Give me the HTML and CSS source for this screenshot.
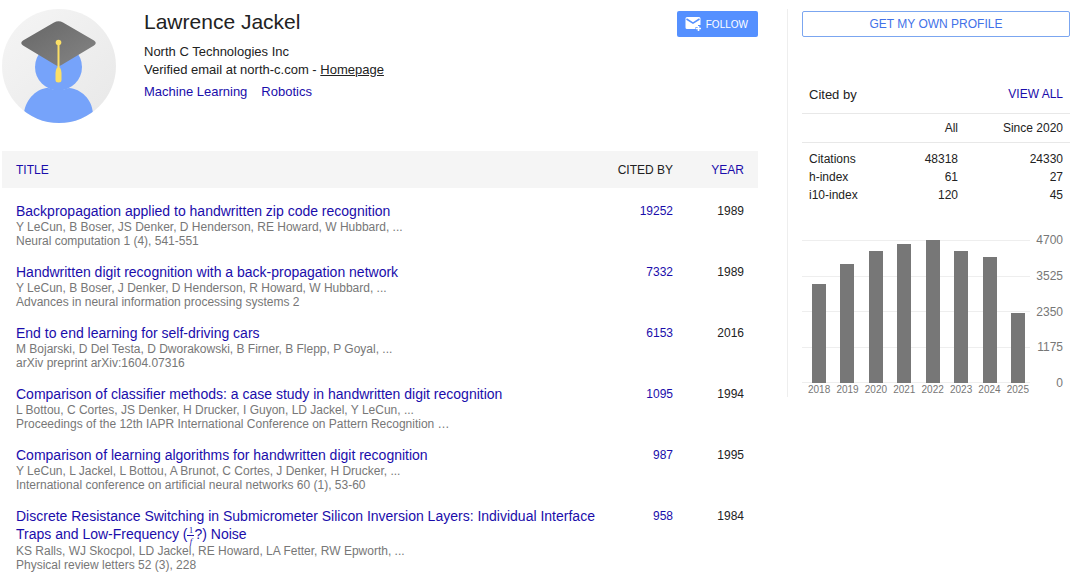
FILE: index.html
```html
<!DOCTYPE html>
<html lang="en">
<head>
    <meta charset="UTF-8">
    <meta name="viewport" content="width=device-width, initial-scale=1.0">
    <title>Lawrence Jackel</title>
    <link rel="stylesheet" href="styles.css">
</head>
<body>
    <div class="page">
        <main class="main">
            <header class="profile">
                <svg class="avatar" viewBox="0 0 114 114" aria-hidden="true">
                    <defs>
                        <clipPath id="circle"><circle cx="57" cy="57" r="57"/></clipPath>
                        <linearGradient id="bg" x1="0" y1="0" x2="1" y2="1">
                            <stop offset="0" stop-color="#f5f5f5"/>
                            <stop offset="1" stop-color="#e8e8e8"/>
                        </linearGradient>
                        <linearGradient id="cap" x1="0" y1="0" x2="1" y2="1">
                            <stop offset="0" stop-color="#666"/>
                            <stop offset="1" stop-color="#858585"/>
                        </linearGradient>
                    </defs>
                    <g clip-path="url(#circle)">
                        <rect width="114" height="114" fill="url(#bg)"/>
                        <circle cx="56.500" cy="58" r="23.500" fill="#76a3fa"/>
                        <path d="M22 114V104C24 89 36 79 46 79Q56.500 83 67 79C79 80 90 90 91 104V114Z" fill="#76a3fa"/>
                        <path d="M52 13.500Q56.500 11 61 13.500L92 31.500Q95.500 34 92 36.500L59.500 56Q56.500 58 53.500 56L21 36.500Q17.500 34 21 31.500Z" fill="url(#cap)"/>
                        <path d="M56.500 34V63" stroke="#fbdf66" stroke-width="2"/>
                        <circle cx="56.500" cy="33.500" r="2.800" fill="#fbdf66"/>
                        <path d="M55 58.500H58Q59.500 61 59.500 64V71Q59.500 73.500 56.500 73.500T53.500 71V64Q53.500 61 55 58.500Z" fill="#fbdf66"/>
                    </g>
                </svg>
                <div class="info">
                    <h1>Lawrence Jackel</h1>
                    <div class="line">North C Technologies Inc</div>
                    <div class="line">Verified email at north-c.com - <a class="homepage" href="#">Homepage</a></div>
                    <div class="interests">
                        <a href="#">Machine Learning</a>
                        <a href="#">Robotics</a>
                    </div>
                </div>
                <button class="follow" type="button">
                    <svg width="17" height="16" viewBox="0 0 17 16" aria-hidden="true">
                        <path d="M2 1H14Q15.500 1 15.500 2.500V9H13V11H10.500V13H2Q.5 13 .5 11.500V2.500Q.5 1 2 1Z" fill="#fff"/>
                        <path d="M1.500 3L8 7.200L14.500 3" fill="none" stroke="#5590ff" stroke-width="1.500"/>
                        <path d="M13.500 10V15M11 12.500H16" stroke="#fff" stroke-width="1.600"/>
                    </svg>
                    <span>FOLLOW</span>
                </button>
            </header>

            <table class="articles">
                <thead>
                    <tr>
                        <th class="title" scope="col"><a href="#">TITLE</a></th>
                        <th class="cited" scope="col">CITED BY</th>
                        <th class="year" scope="col"><a href="#">YEAR</a></th>
                    </tr>
                </thead>
                <tbody>
                    <tr>
                        <td class="title">
                            <a href="#">Backpropagation applied to handwritten zip code recognition</a>
                            <div class="gray">Y LeCun, B Boser, JS Denker, D Henderson, RE Howard, W Hubbard, ...</div>
                            <div class="gray">Neural computation 1 (4), 541-551</div>
                        </td>
                        <td class="cited"><a href="#">19252</a></td>
                        <td class="year">1989</td>
                    </tr>
                    <tr>
                        <td class="title">
                            <a href="#">Handwritten digit recognition with a back-propagation network</a>
                            <div class="gray">Y LeCun, B Boser, J Denker, D Henderson, R Howard, W Hubbard, ...</div>
                            <div class="gray">Advances in neural information processing systems 2</div>
                        </td>
                        <td class="cited"><a href="#">7332</a></td>
                        <td class="year">1989</td>
                    </tr>
                    <tr>
                        <td class="title">
                            <a href="#">End to end learning for self-driving cars</a>
                            <div class="gray">M Bojarski, D Del Testa, D Dworakowski, B Firner, B Flepp, P Goyal, ...</div>
                            <div class="gray">arXiv preprint arXiv:1604.07316</div>
                        </td>
                        <td class="cited"><a href="#">6153</a></td>
                        <td class="year">2016</td>
                    </tr>
                    <tr>
                        <td class="title">
                            <a href="#">Comparison of classifier methods: a case study in handwritten digit recognition</a>
                            <div class="gray">L Bottou, C Cortes, JS Denker, H Drucker, I Guyon, LD Jackel, Y LeCun, ...</div>
                            <div class="gray">Proceedings of the 12th IAPR International Conference on Pattern Recognition …</div>
                        </td>
                        <td class="cited"><a href="#">1095</a></td>
                        <td class="year">1994</td>
                    </tr>
                    <tr>
                        <td class="title">
                            <a href="#">Comparison of learning algorithms for handwritten digit recognition</a>
                            <div class="gray">Y LeCun, L Jackel, L Bottou, A Brunot, C Cortes, J Denker, H Drucker, ...</div>
                            <div class="gray">International conference on artificial neural networks 60 (1), 53-60</div>
                        </td>
                        <td class="cited"><a href="#">987</a></td>
                        <td class="year">1995</td>
                    </tr>
                    <tr>
                        <td class="title">
                            <a href="#">Discrete Resistance Switching in Submicrometer Silicon Inversion Layers: Individual Interface Traps and Low-Frequency (<span class="frac"><span>1</span><i>f</i></span>?) Noise</a>
                            <div class="gray">KS Ralls, WJ Skocpol, LD Jackel, RE Howard, LA Fetter, RW Epworth, ...</div>
                            <div class="gray">Physical review letters 52 (3), 228</div>
                        </td>
                        <td class="cited"><a href="#">958</a></td>
                        <td class="year">1984</td>
                    </tr>
                </tbody>
            </table>
        </main>

        <aside class="sidebar">
            <button class="own-profile" type="button">GET MY OWN PROFILE</button>

            <div class="cited-head">
                <h2>Cited by</h2>
                <a href="#">VIEW ALL</a>
            </div>
            <table class="stats">
                <thead>
                    <tr><th></th><th scope="col">All</th><th class="since" scope="col">Since 2020</th></tr>
                </thead>
                <tbody>
                    <tr><th scope="row">Citations</th><td>48318</td><td>24330</td></tr>
                    <tr><th scope="row">h-index</th><td>61</td><td>27</td></tr>
                    <tr><th scope="row">i10-index</th><td>120</td><td>45</td></tr>
                </tbody>
            </table>

            <div class="chart">
                <div class="plot">
                    <div class="grid"><hr><hr><hr><hr><hr></div>
                    <div class="bars">
                        <div class="bar" style="height: 69%"></div>
                        <div class="bar" style="height: 83%"></div>
                        <div class="bar" style="height: 92%"></div>
                        <div class="bar" style="height: 97%"></div>
                        <div class="bar" style="height: 100%"></div>
                        <div class="bar" style="height: 92%"></div>
                        <div class="bar" style="height: 88%"></div>
                        <div class="bar" style="height: 49%"></div>
                    </div>
                    <div class="years">
                        <span>2018</span><span>2019</span><span>2020</span><span>2021</span><span>2022</span><span>2023</span><span>2024</span><span>2025</span>
                    </div>
                </div>
                <div class="axis">
                    <span>4700</span><span>3525</span><span>2350</span><span>1175</span><span>0</span>
                </div>
            </div>
        </aside>
    </div>
</body>
</html>
```
FILE: styles.css
```css
body {
    margin: 0;
    background: #fff;
    color: #222;
    font-family: "Liberation Sans", Arial, sans-serif;
    font-size: 12px;
}

a {
    color: #1a0dab;
    text-decoration: none;
}

a:hover {
    text-decoration: underline;
}

button {
    font-family: inherit;
    cursor: pointer;
}

table {
    width: 100%;
    border-collapse: collapse;
}

th {
    font-weight: normal;
}

.page {
    display: flex;
    align-items: flex-start;
    gap: 29px;
    padding: 9px 10px 0 2px;
}

.main {
    flex: 1;
    min-width: 0;
}

/* Profile header */
.profile {
    display: flex;
    align-items: flex-start;
    margin-bottom: 28px;
}

.avatar {
    width: 114px;
    height: 114px;
    margin-right: 28px;
}

.info {
    flex: 1;
    font-size: 13px;
    line-height: 18px;
}

h1 {
    margin: 0 0 8px;
    font-size: 21px;
    font-weight: normal;
    line-height: 26px;
}

.homepage {
    color: #222;
    text-decoration: underline;
}

.interests {
    display: flex;
    gap: 14px;
    margin-top: 4px;
}

.follow {
    display: flex;
    align-items: center;
    gap: 4px;
    height: 26px;
    margin-top: 2px;
    padding: 0 10px 0 8px;
    border: none;
    border-radius: 2px;
    background: #5590ff;
    color: #fff;
    font-size: 10px;
}

/* Article list */
.articles th {
    height: 37px;
    padding: 0 14px;
    background: #f5f5f5;
}

.articles td {
    padding: 14px 14px 1px;
    line-height: 18px;
    vertical-align: top;
}

.articles .title {
    padding-right: 0;
    text-align: left;
}

.articles td.title {
    font-size: 14px;
}

.articles .cited {
    width: 56px;
    text-align: right;
    white-space: nowrap;
}

.articles .year {
    width: 43px;
    text-align: right;
}

.gray {
    color: #777;
    font-size: 12px;
    line-height: 14px;
}

/* Stacked fraction inside a title */
.frac {
    display: inline-flex;
    flex-direction: column;
    min-width: 7px;
    margin: -2px 0;
    vertical-align: middle;
    font-family: "Liberation Serif", serif;
    font-size: 9px;
    line-height: 10px;
    text-align: center;
}

.frac i {
    border-top: 1px solid;
}

/* Right column */
.sidebar {
    width: 268px;
    padding-left: 14px;
    padding-top: 2px;
    border-left: 1px solid #eee;
}

.own-profile {
    width: 100%;
    height: 26px;
    border: 1px solid #7ba6f0;
    border-radius: 2px;
    background: #fff;
    color: #4272e8;
    font-size: 12px;
}

.cited-head {
    display: flex;
    align-items: center;
    justify-content: space-between;
    height: 38px;
    margin-top: 38px;
    padding: 0 7px;
    border-bottom: 1px solid #e8e8e8;
}

h2 {
    margin: 0;
    font-size: 13px;
    font-weight: normal;
}

.stats th,
.stats td {
    padding: 0 7px;
    line-height: 18px;
    text-align: right;
}

.stats .since {
    width: 91px;
}

.stats thead th {
    height: 28px;
    border-bottom: 1px solid #e8e8e8;
}

.stats tbody th {
    text-align: left;
}

.stats tbody tr:first-child > * {
    padding-top: 7px;
}

/* Citations per year */
.chart {
    display: flex;
    justify-content: space-between;
    margin-top: 36px;
    padding-right: 7px;
    color: #777;
}

.plot {
    position: relative;
    width: 228px;
}

.grid {
    position: absolute;
    top: 0;
    left: 0;
    right: 0;
    display: flex;
    flex-direction: column;
    justify-content: space-between;
    height: 143px;
}

.grid hr {
    width: 100%;
    height: 1px;
    margin: 0;
    border: none;
    background: #eee;
}

.bars {
    position: relative;
    display: flex;
    align-items: flex-end;
    justify-content: space-between;
    height: 143px;
    padding: 0 5px 0 10px;
}

.bar {
    width: 14px;
    background: #777;
}

.years {
    display: flex;
    justify-content: space-between;
    padding: 0 1px 0 6px;
    font-size: 10px;
    line-height: 14px;
}

.axis {
    display: flex;
    flex-direction: column;
    justify-content: space-between;
    height: 157px;
    margin-top: -7px;
    line-height: 14px;
    text-align: right;
}
```
